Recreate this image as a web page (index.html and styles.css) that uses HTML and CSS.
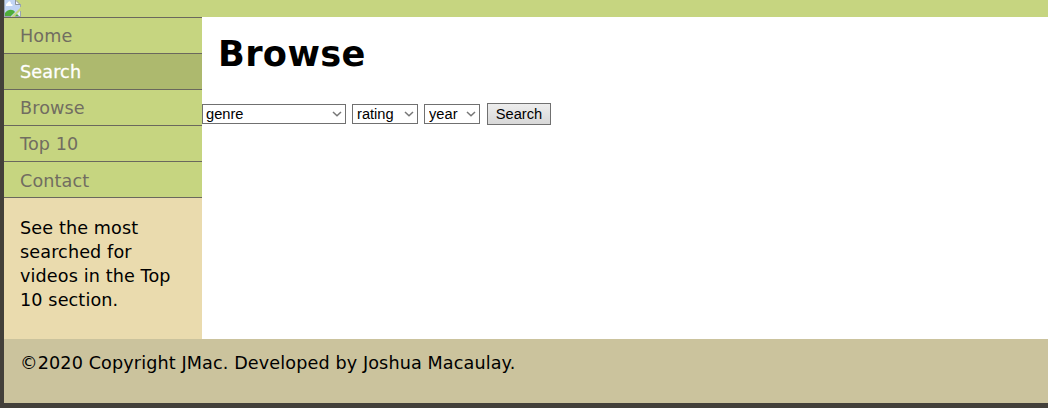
FILE: index.html
```html
<!DOCTYPE html>
<html lang="en">
<head>
<meta charset="utf-8">
<title>Browse</title>
<link rel="stylesheet" href="styles.css">
</head>
<body>
<div class="page">
  <header class="banner">
    <svg class="broken" width="17" height="17" viewBox="0 0 17 17" aria-hidden="true">
      <path fill="#c2d5f5" d="M1 0H11V5H16V8L7 17H1Z"/>
      <path fill="#fff" d="M2 5C2 3 4 3 4 2C6 0 7 2 7 4C9 4 9 6 8 6H2Z"/>
      <path fill="#4fae3a" d="M1 16V13C4 9 9 9 11 12L7 16Z"/>
      <path fill="#e3ebf8" d="M16 11V16H11Z"/>
      <path fill="#4fae3a" d="M13 14L15 16H11Z"/>
      <path fill="#f4f6fa" stroke="#8e959f" d="M11.5 0V4.500H16L12 .5"/>
      <path fill="none" stroke="#9aa5b3" d="M.5 0V16.500H7M16.500 4V7M16.500 11V16.500H11"/>
    </svg>
  </header>
  <div class="middle">
    <aside class="side">
      <nav class="nav">
        <a class="link">Home</a>
        <a class="link active">Search</a>
        <a class="link">Browse</a>
        <a class="link">Top 10</a>
        <a class="link last">Contact</a>
      </nav>
      <p class="note">See the most<br>searched for<br>videos in the Top<br>10 section.</p>
    </aside>
    <main class="main">
      <h1 class="title">Browse</h1>
      <form class="filters">
        <label class="field genre"><select class="select"><option>genre</option></select><svg class="chevron" width="10" height="6" viewBox="0 0 10 6"><path d="M1 1L5 4.800L9 1"/></svg></label>
        <label class="field rating"><select class="select"><option>rating</option></select><svg class="chevron" width="10" height="6" viewBox="0 0 10 6"><path d="M1 1L5 4.800L9 1"/></svg></label>
        <label class="field year"><select class="select"><option>year</option></select><svg class="chevron" width="10" height="6" viewBox="0 0 10 6"><path d="M1 1L5 4.800L9 1"/></svg></label>
        <button class="submit" type="button">Search</button>
      </form>
    </main>
  </div>
  <footer class="footer">©2020 Copyright JMac. Developed by Joshua Macaulay.</footer>
</div>
</body>
</html>
```
FILE: styles.css
```css
* { box-sizing: border-box; }
body {
  margin: 0;
  height: 408px;
  overflow: hidden;
  background: #43403a;
  color: #000;
  font: 17.6px/24px Verdana, "DejaVu Sans", sans-serif;
  letter-spacing: .12px;
}
.page { margin-left: 4px; }
.banner { height: 17px; background: #c6d580; }
.broken { display: block; }
.middle { display: flex; height: 322px; }
.side { width: 198px; background: #eadbae; }
.nav { border-top: 1px solid #6a685d; }
.link {
  display: block;
  height: 36px;
  padding-left: 16px;
  border-bottom: 1px solid #6a685d;
  background: #c6d580;
  color: #716d61;
  line-height: 37px;
}
.last { line-height: 39px; }
.active { background: #adb96e; color: #fff; -webkit-text-stroke: .3px #fff; }
.note { margin: 18px 0 0 16px; }
.main { flex: 1; background: #fff; }
.title {
  margin: 0;
  padding: 17px 0 0 16px;
  font-size: 35.2px;
  line-height: 40px;
  letter-spacing: .35px;
}
.filters { display: flex; align-items: center; margin-top: 29px; height: 22px; }
.field { display: grid; align-items: center; height: 20px; margin-right: 6px; }
.genre { width: 144px; }
.rating { width: 66px; }
.year { width: 56px; margin-right: 7px; }
.select {
  grid-area: 1 / 1;
  width: 100%;
  height: 20px;
  margin: 0;
  padding: 0 0 0 4px;
  border: 1px solid #707070;
  border-radius: 0;
  appearance: none;
  background: #fff;
  color: #000;
  font: 14.667px/18px Arial, "Liberation Sans", sans-serif;
}
.genre .select { padding-left: 3px; }
.chevron {
  grid-area: 1 / 1;
  justify-self: end;
  margin-right: 4px;
  fill: none;
  stroke: #777;
  stroke-width: 1.5;
  pointer-events: none;
}
.submit {
  width: 64px;
  height: 22px;
  padding: 0;
  border: 1px solid #707070;
  border-radius: 0;
  background: linear-gradient(#ededed, #d8d8d8);
  color: #000;
  font: 14.667px/20px Arial, "Liberation Sans", sans-serif;
}
.footer { height: 64px; padding: 12px 16px; background: #cbc39d; }
```
